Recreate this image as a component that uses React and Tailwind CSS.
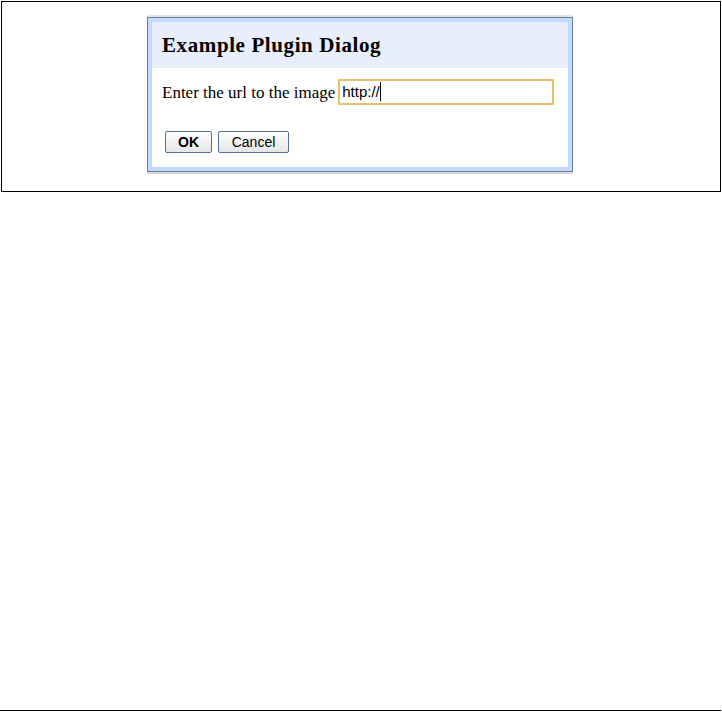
export default function App() {
  return (
    <div className="relative w-[722px] h-[712px] bg-white" style={{ fontFamily: '"Liberation Serif", serif' }}>
      <div className="ml-px mt-px w-[720px] h-[191px] border border-black">
        <div className="ml-[145px] mt-[13px] w-[426px] border-t-2 border-[#e2e2e2]">
          <div className="border border-[#6a7e9c] bg-[#c3d9ff] p-[4px] shadow-[0_2px_0_#d9d9d9]">
            <div className="h-[46px] bg-[#e8eefa] pl-[10px] pt-[2px] flex items-center">
              <span className="text-[21px] font-bold text-black tracking-[0.6px]">Example Plugin Dialog</span>
            </div>
            <div className="bg-white h-[99px] pl-[10px] pt-[10px]">
              <div className="flex items-center gap-[3px]">
                <span className="text-[17px] text-black pt-[2px]">Enter the url to the image</span>
                <div className="w-[216px] h-[26px] border-2 border-[#e8c16c] flex items-center pl-[2px] text-[15px] text-black" style={{ fontFamily: '"Liberation Sans", Arial, sans-serif' }}>
                  <span>http://</span>
                  <span className="w-px h-[19px] bg-black"></span>
                </div>
              </div>
              <div className="flex gap-[6px] mt-[25px] ml-[3px]" style={{ fontFamily: '"Liberation Sans", Arial, sans-serif' }}>
                <button className="w-[47px] h-[22px] border border-[#50709a] rounded-[2px] bg-gradient-to-b from-white to-[#e6e6e6] text-[14px] font-bold text-black leading-none">OK</button>
                <button className="w-[71px] h-[22px] border border-[#50709a] rounded-[2px] bg-gradient-to-b from-white to-[#e6e6e6] text-[14px] text-black leading-none">Cancel</button>
              </div>
            </div>
          </div>
        </div>
      </div>
      <div className="absolute left-0 top-[709px] w-[721px] h-px bg-black"></div>
    </div>
  );
}
